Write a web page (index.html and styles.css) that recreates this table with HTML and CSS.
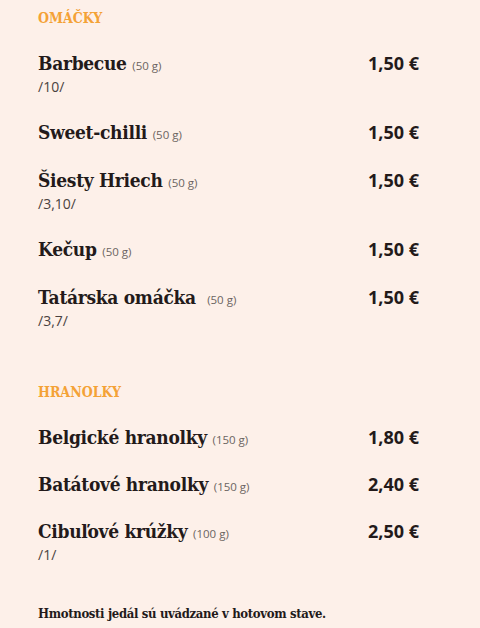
FILE: index.html
```html
<!DOCTYPE html>
<html lang="sk">
<head>
<meta charset="utf-8">
<title>Menu</title>
<link rel="stylesheet" href="styles.css">
</head>
<body>
<main class="menu">
  <section class="section">
    <h2 class="section-title">OMÁČKY</h2>
    <div class="item">
      <div class="item-row"><span class="name">Barbecue <span class="weight">(50 g)</span></span><span class="price">1,50 €</span></div>
      <div class="allergens">/10/</div>
    </div>
    <div class="item">
      <div class="item-row"><span class="name">Sweet-chilli <span class="weight">(50 g)</span></span><span class="price">1,50 €</span></div>
    </div>
    <div class="item">
      <div class="item-row"><span class="name">Šiesty Hriech <span class="weight">(50 g)</span></span><span class="price">1,50 €</span></div>
      <div class="allergens">/3,10/</div>
    </div>
    <div class="item">
      <div class="item-row"><span class="name">Kečup <span class="weight">(50 g)</span></span><span class="price">1,50 €</span></div>
    </div>
    <div class="item">
      <div class="item-row"><span class="name">Tatárska omáčka &nbsp;<span class="weight">(50 g)</span></span><span class="price">1,50 €</span></div>
      <div class="allergens">/3,7/</div>
    </div>
  </section>
  <section class="section section-second">
    <h2 class="section-title">HRANOLKY</h2>
    <div class="item">
      <div class="item-row"><span class="name">Belgické hranolky <span class="weight">(150 g)</span></span><span class="price">1,80 €</span></div>
    </div>
    <div class="item">
      <div class="item-row"><span class="name">Batátové hranolky <span class="weight">(150 g)</span></span><span class="price">2,40 €</span></div>
    </div>
    <div class="item">
      <div class="item-row"><span class="name">Cibuľové krúžky <span class="weight">(100 g)</span></span><span class="price">2,50 €</span></div>
      <div class="allergens">/1/</div>
    </div>
  </section>
  <p class="note">Hmotnosti jedál sú uvádzané v hotovom stave.</p>
</main>
</body>
</html>
```
FILE: styles.css
```css
html, body {
  margin: 0;
  padding: 0;
  background: #fdf0e9;
}
body {
  color: #231a1a;
  font-family: "DejaVu Serif Condensed", "DejaVu Serif", serif;
}
.menu {
  padding: 8px 61px 0 38px;
}
.section-title {
  margin: 0;
  height: 20px;
  font-size: 14px;
  line-height: 20px;
  font-weight: bold;
  color: #f4a236;
}
.section-title + .item {
  margin-top: 23px;
}
.item + .item {
  margin-top: 24px;
}
.section-second .item + .item {
  margin-top: 23px;
}
.item-row {
  display: flex;
  justify-content: space-between;
  align-items: baseline;
  height: 24px;
  line-height: 24px;
}
.name {
  font-size: 19px;
  font-weight: bold;
  letter-spacing: -0.3px;
  line-height: 24px;
}
.weight {
  font-family: "Open Sans", "Noto Sans", sans-serif;
  font-weight: normal;
  font-size: 11.5px;
  line-height: 11px;
  letter-spacing: 0;
  color: #6b6461;
}
.price {
  font-family: "Open Sans", "Noto Sans", sans-serif;
  font-weight: bold;
  font-size: 18px;
  line-height: 24px;
}
.allergens {
  margin-top: 3px;
  height: 18px;
  font-family: "Open Sans", "Noto Sans", sans-serif;
  font-size: 14px;
  line-height: 18px;
  color: #4a4240;
}
.section-second {
  margin-top: 52px;
}
.note {
  margin: 42px 0 0;
  font-size: 13px;
  line-height: 16px;
  font-weight: bold;
  letter-spacing: -0.35px;
}
```
